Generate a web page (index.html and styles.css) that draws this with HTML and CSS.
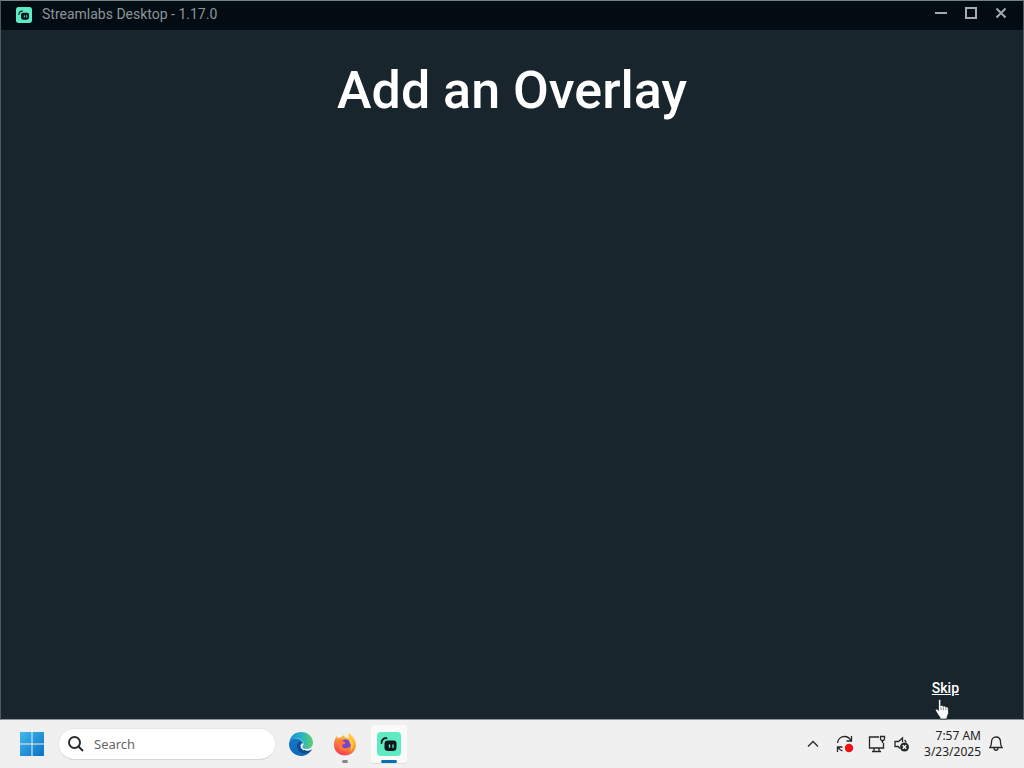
FILE: index.html
```
<!DOCTYPE html>
<html lang="en">
<head>
<meta charset="utf-8">
<title>Streamlabs Desktop</title>
<link rel="stylesheet" href="styles.css">
</head>
<body>
<svg class="defs" aria-hidden="true">
  <symbol id="logo" viewBox="0 0 24 24">
    <rect width="24" height="24" rx="4" fill="#5eeac2"/>
    <path d="M4.500 11C4.500 8 6.500 6 9.500 6.200" fill="none" stroke="#09161d" stroke-width="1.800" stroke-linecap="round"/>
    <path d="M11 8.500h5.500c2 0 3 1 3 3V15c0 3-1.200 4-4 4h-4C8.600 19 7.500 18 7.500 15.500V12c0-2.500 1-3.500 3.500-3.500z" fill="#09161d"/>
    <path d="M12.500 13v2.200M16 13v2.200" stroke="#5eeac2" stroke-width="1.400" stroke-linecap="round"/>
  </symbol>
</svg>
<div class="window">
  <header class="titlebar">
    <svg class="titlebar-logo"><use href="#logo"/></svg>
    <span class="titlebar-text">Streamlabs Desktop - 1.17.0</span>
    <div class="window-controls">
      <button aria-label="Minimize"><svg viewBox="0 0 12 12"><path d="M0 6h12" stroke-width="2"/></svg></button>
      <button aria-label="Maximize"><svg viewBox="0 0 12 12"><path d="M1 1h10v10H1z" stroke-width="2"/></svg></button>
      <button aria-label="Close"><svg viewBox="0 0 12 12"><path d="M1.500 1.500l9 9M10.500 1.500l-9 9" stroke-width="2"/></svg></button>
    </div>
  </header>
  <main class="content">
    <h1>Add an Overlay</h1>
    <div class="footer"><a class="skip" href="#">Skip</a></div>
    <svg class="cursor" viewBox="0 0 16 21"><path d="M3.500 1.500C3.500.2 5.800.2 5.800 1.500V7c.5-.8 2.200-.6 2.400.5.7-.8 2.300-.5 2.500.7.8-.7 2.400-.2 2.500 1l.3 4c.1 2.500-1.500 3.500-1.500 5.500V20H5v-1.500C3.500 16.500 2 14 .8 12c-.8-1.500.6-2.500 1.700-1.500l1 1z" fill="#fff" stroke="#111a20" stroke-width=".7"/><path d="M6 8v3M8.400 8.500V11M10.800 9.200v2" stroke="#4b555b" stroke-width=".7"/></svg>
  </main>
</div>
<footer class="taskbar">
  <button class="start" aria-label="Start">
    <svg viewBox="0 0 24 24"><defs><linearGradient id="win" x2="1" y2="1"><stop stop-color="#43b9ee"/><stop offset="1" stop-color="#0a70c5"/></linearGradient></defs><path d="M0 0h11.500v11.500H0zM12.500 0H24v11.500H12.500zM0 12.500h11.500V24H0zM12.500 12.500H24V24H12.500z" fill="url(#win)"/></svg>
  </button>
  <label class="search">
    <svg viewBox="0 0 16 16"><circle cx="6.500" cy="6.500" r="5.500"/><path d="M10.500 10.500l4.500 4.500"/></svg>
    <input type="text" placeholder="Search" aria-label="Search">
  </label>
  <nav class="apps">
    <button aria-label="Edge">
      <svg viewBox="0 0 24 24"><defs>
        <linearGradient id="e1" x2="1"><stop stop-color="#1590d5"/><stop offset=".5" stop-color="#25b3cc"/><stop offset="1" stop-color="#5fcf68"/></linearGradient>
        <linearGradient id="e2" x2="0" y2="1"><stop stop-color="#1478c4"/><stop offset="1" stop-color="#1269b8"/></linearGradient></defs>
        <path d="M.5 10C1.200 4 6 0 12 0c7 0 12 5 12 10.500 0 4-3 6.300-6.500 6.300-2.500 0-4.200-1-4-2 .2-.8 1-1.300 1-3C14.500 8.500 11 6.500 7.500 6.500 3.800 6.500 1.500 8.500.5 10z" fill="url(#e1)"/>
        <path d="M0 12c0-3.500 3.500-5.700 7.300-5.500 3.500.2 6.700 2.400 7 5.300 0 1.500-.8 2.200-1 3-.2 1 1.500 2 4 2 2 0 3.700-.7 5-1.600 1 .2 1 1.300.4 2.300C20.500 21.500 16.500 24 12.500 24 5.500 24 0 18.600 0 12z" fill="url(#e2)"/>
        <path d="M12 9.500C9.500 9.500 8 11.500 8 14c0 4 3.500 7.500 8 7.500 2.500 0 4.700-1.200 6.200-3 .7-1 .2-1.700-.6-1.300-4 1.600-9 .3-9.800-3.200-.4-2 .2-3.500.2-4.500z" fill="#124a92"/>
        <path d="M14.300 12c0 1.400-.8 2.100-1 2.900-.2 1 1.500 2 4 2 2.300 0 4.300-.8 5.500-2 .8.500.6 1.500.1 2.300-4.500 3-11.400 1.300-11.400-3.200 0-2.300 2.800-3.500 2.800-2z" fill="#f3f6f8"/>
      </svg>
    </button>
    <button class="running" aria-label="Firefox">
      <svg viewBox="0 0 24 24"><defs>
        <linearGradient id="f1" x1=".8" y1="0" x2=".3" y2="1"><stop stop-color="#ffdf40"/><stop offset=".45" stop-color="#ff9a35"/><stop offset="1" stop-color="#f13853"/></linearGradient></defs>
        <path d="M3.500 4l1 2.200C5.600 5.400 7 5.200 8 5.600 8.800 4.300 10 3.500 11.300 3.200c-.3 1 .2 1.600 1.200 2.300L16 6c-.8-2-.8-3.800.2-5.500 2 3.300 6.800 6 6.800 12C23 19 18 23.500 12 23.500S1 19 1 13c0-3.500 1-6.500 2.500-9z" fill="url(#f1)"/>
        <circle cx="12.500" cy="12.500" r="5.300" fill="#7745d6"/>
        <path d="M5.500 9c2.500-1 4.500-.3 6.300 1.200 1 .8.400 1.800-1.200 2.100-1.600.2-2 1-1.200 2.400 1.500 2.300 5.500 2 7.500-.7-.2 3-3 5.500-6 5-3.800-.6-6.200-4.500-5.400-10z" fill="#ff7a36"/>
        <path d="M16 3.500c1.500 3.500 4.500 5 4.500 9.500 0 3-1.500 5-3.500 6.500 1.500-3 1.700-6.500-.5-9.500z" fill="#ffcd35"/>
      </svg>
    </button>
    <button class="running active" aria-label="Streamlabs Desktop"><svg><use href="#logo"/></svg></button>
  </nav>
  <div class="tray">
    <button class="chevron" aria-label="Show hidden icons"><svg viewBox="0 0 12 12"><path d="M1 8.500l5-5 5 5"/></svg></button>
    <button class="update" aria-label="Updates"><svg viewBox="0 0 18 18"><path d="M1.500 8C2 4 5 1.500 8.500 1.500c3 0 5 1.500 6.500 4M15.500 1v5h-5M1.500 17v-5h5M2 12c1 2 2.500 3.300 4.500 4"/><circle class="dot" cx="13" cy="13" r="4.200"/></svg></button>
    <button class="network" aria-label="Network"><svg viewBox="0 0 18 18"><path d="M11 2H1.500v11h14V8M6 13v3.500M11 13v3.500M4 16.500h9M12.500 1.500h4v2.500l-1 1.500h-2l-1-1.500zM14.500 5.500V8"/></svg></button>
    <button class="sound" aria-label="Muted"><svg viewBox="0 0 16 16"><path d="M8.500 6V2L4.500 5.500H1v5h3l2 2M10.500 4c1 .7 1.500 1.600 1.500 2.500"/><circle class="badge" cx="10.500" cy="11" r="4.500"/><path class="cross" d="M8.800 9.300l3.400 3.400M12.200 9.300l-3.400 3.400"/></svg></button>
    <div class="clock"><time>7:57 AM</time><time datetime="2025-03-23">3/23/2025</time></div>
    <button class="bell" aria-label="Notifications"><svg viewBox="0 0 14 16"><path d="M1 11.500c1.300-1.500 1.500-2.500 1.500-5.500C2.500 3 4.300 1 7 1s4.500 2 4.500 5c0 3 .2 4 1.500 5.500zM5 12c0 3 4 3 4 0"/></svg></button>
  </div>
</footer>
</body>
</html>
```

FILE: styles.css
```
* { box-sizing: border-box; }
body {
  margin: 0;
  height: 100vh;
  display: flex;
  flex-direction: column;
  font-family: Roboto, "Liberation Sans", sans-serif;
  background: #f0f0f0;
}
button { border: 0; padding: 0; background: none; display: grid; place-items: center; }
svg { display: block; }
.defs { position: absolute; width: 0; height: 0; }

.window {
  flex: 1;
  display: flex;
  flex-direction: column;
  border: 1px solid #4c5a5f;
  border-top-color: #718083;
  border-bottom-color: #8d9599;
  background: #19252d;
}
.titlebar {
  height: 29px;
  display: flex;
  align-items: center;
  padding: 0 7px 3px 15px;
  background: #030c12;
  color: #8d9599;
}
.titlebar-logo { width: 16px; height: 16px; margin-top: 2px; }
.titlebar-text { margin-left: 10px; font-size: 14px; line-height: 20px; }
.window-controls { margin-left: auto; display: flex; padding-bottom: 2px; }
.window-controls button { width: 30px; height: 24px; }
.window-controls svg { width: 12px; height: 12px; fill: none; stroke: #a3abae; }

.content { flex: 1; position: relative; display: flex; flex-direction: column; }
h1 {
  margin: 31px 0 0;
  text-align: center;
  font-size: 52px;
  line-height: 60px;
  font-weight: 500;
  color: #fff;
}
.footer { margin-top: auto; padding: 0 64px 21px; text-align: right; }
.skip { font-size: 14px; line-height: 20px; font-weight: 500; color: #fff; }
.cursor { position: absolute; right: 72px; bottom: -1px; width: 16px; height: 21px; }

.taskbar {
  height: 48px;
  display: flex;
  align-items: center;
  padding: 0 21px 0 20px;
  background: #f0f0f0;
  font-family: "Noto Sans", "Open Sans", sans-serif;
}
.start svg { width: 24px; height: 24px; }
.search {
  display: flex;
  align-items: center;
  gap: 10px;
  width: 218px;
  height: 32px;
  margin-left: 14px;
  padding: 0 9px;
  border: 1px solid #e5e6e7;
  border-bottom-color: #d5d6d7;
  border-radius: 16px;
  background: #fff;
}
.search svg { width: 16px; height: 16px; flex: none; fill: none; stroke: #292b2d; stroke-width: 2; }
.search input {
  flex: 1;
  min-width: 0;
  padding: 0;
  border: 0;
  outline: 0;
  background: none;
  font: 13px/20px "Noto Sans", "Open Sans", sans-serif;
}
.search input::placeholder { color: #666; opacity: 1; }
.apps { display: flex; gap: 8px; margin-left: 7px; }
.apps button { position: relative; width: 36px; height: 38px; }
.apps svg { width: 24px; height: 24px; }
.apps .active { background: #fafafa; border-radius: 3px; box-shadow: 0 1px 0 #dedfe0; }
.running::after {
  content: "";
  position: absolute;
  left: 50%;
  bottom: 0;
  width: 6px;
  height: 3px;
  border-radius: 2px;
  background: #85888a;
  transform: translateX(-50%);
}
.active::after { width: 16px; background: #0670ad; }

.tray { margin-left: auto; display: flex; align-items: center; }
.tray svg { fill: none; stroke: #25282a; stroke-width: 1.3; }
.chevron { margin-right: 17px; }
.chevron svg { width: 12px; height: 12px; }
.update { margin-right: 14px; }
.update svg, .network svg { width: 18px; height: 18px; }
.network { margin-right: 8px; }
.sound svg { width: 16px; height: 16px; }
.tray .dot { fill: #ed1116; stroke: none; }
.tray .badge { fill: #292c2e; stroke: none; }
.tray .cross { stroke: #fff; }
.clock {
  display: flex;
  flex-direction: column;
  align-items: flex-end;
  margin: 0 8px 0 14px;
  font-size: 12px;
  line-height: 16px;
  color: #222;
}
.bell svg { width: 14px; height: 16px; }
```
